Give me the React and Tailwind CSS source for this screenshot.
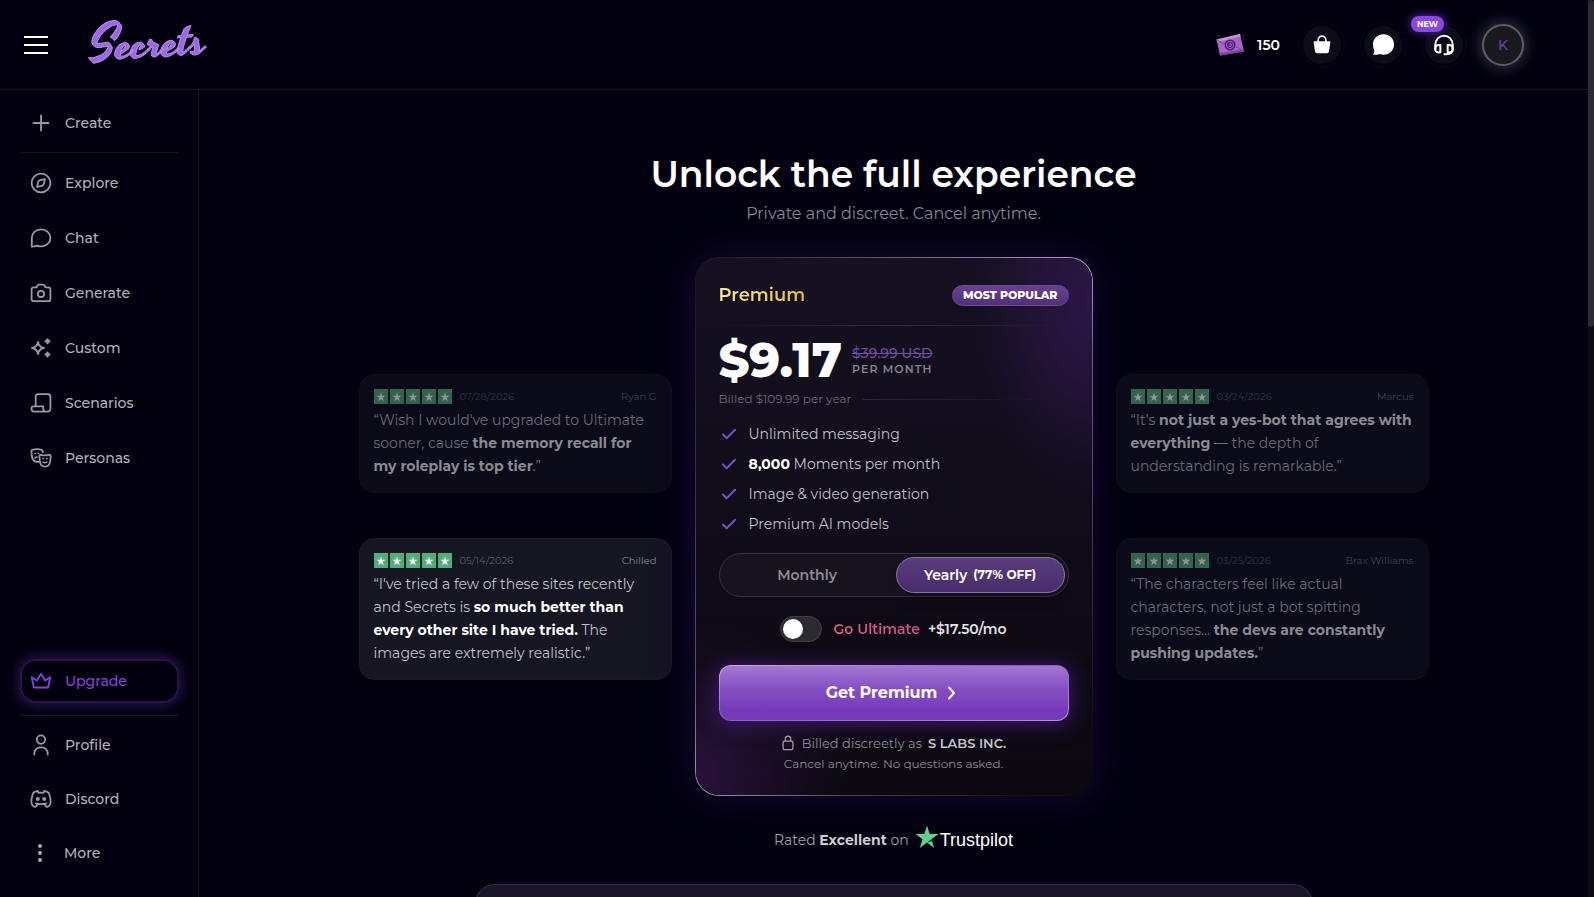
import React, { useState } from "react";

const STAR = "M12 1.6l2.7 7.3 7.8.3-6.100 4.800 2.100 7.500L12 17.200 5.500 21.500l2.100-7.500L1.500 9.200l7.800-.3z";

function Icon({ children, className = "size-6" }) {
  return (
    <svg
      viewBox="0 0 24 24"
      className={className}
      fill="none"
      stroke="currentColor"
      strokeWidth="1.8"
      strokeLinecap="round"
      strokeLinejoin="round"
      aria-hidden="true"
    >
      {children}
    </svg>
  );
}

const icons = {
  Create: <path d="M12 4.500v15M4.500 12h15" />,
  Explore: (
    <>
      <circle cx="12" cy="12" r="9.400" />
      <path d="M15.900 8.100l-1 4.800a2.600 2.600 0 0 1-2 2l-4.800 1 1-4.800a2.600 2.600 0 0 1 2-2z" />
    </>
  ),
  Chat: <path d="M2.800 20.700V12C2.800 7 6.800 3.400 12 3.400s9.400 3.700 9.400 8.500-4.200 8.500-9.400 8.500c-1.600 0-3-.3-4.200-.8-1.500.6-3 1-5 1.100z" />,
  Generate: (
    <>
      <path d="M7.500 6.400l.8-1.700a1.800 1.800 0 0 1 1.600-1h4.200a1.800 1.800 0 0 1 1.600 1l.8 1.700h2.900a2 2 0 0 1 2 2v9.800a2 2 0 0 1-2 2H4.600a2 2 0 0 1-2-2V8.400a2 2 0 0 1 2-2z" />
      <circle cx="12" cy="12.900" r="3.100" />
    </>
  ),
  Custom: (
    <>
      <path d="M9 6c.6 3.700 2.300 5.400 6 6-3.700.6-5.400 2.300-6 6-.6-3.700-2.300-5.400-6-6 3.700-.6 5.400-2.300 6-6z" />
      <path d="M18.500 3.500v3.600M16.700 5.300h3.600M18.500 16.700v3.600M16.700 18.500h3.600" strokeWidth="2.400" />
    </>
  ),
  Scenarios: (
    <path d="M6.700 15.300V5.600a2.400 2.400 0 0 1 2.400-2.400h9.900a2.400 2.400 0 0 1 2.400 2.400v12.200a2.800 2.800 0 0 1-2.800 2.800H5.300a2.800 2.800 0 0 1-2.800-2.800v-.5a2 2 0 0 1 2-2h9.700v2.700a2.700 2.700 0 0 0 2.700 2.600" />
  ),
  Personas: (
    <>
      <path d="M9.600 15.800c-3.800.4-6.100-1.700-6.700-5.300l-.5-5.200a1.300 1.300 0 0 1 1-1.400c3-1 6-1 9.200 0a1.300 1.300 0 0 1 1 1.300v1" />
      <path d="M12 8.800c2.700.8 5.400.8 8.100 0a1.300 1.300 0 0 1 1.600 1.400l-.5 4.800c-.4 3.500-2.300 5.700-5.200 5.700s-4.800-2.200-5.200-5.700l-.4-4.800A1.300 1.300 0 0 1 12 8.800z" />
      <path d="M6 7.600h.6M9.200 7.300h.6M13.900 12.600h.6M17.500 12.600h.6M14 16c1.300 1 2.700 1 4 0M5.900 12c.6-.7 1.300-1 2.200-1" strokeWidth="1.500" />
    </>
  ),
  Upgrade: <path d="M4.900 18.500h14.200l2.200-10.300-5 3.300L12 4.900l-4.300 6.600-5-3.300z" />,
  Profile: (
    <>
      <circle cx="12" cy="6.600" r="4.200" />
      <path d="M5.300 21.500v-1.200a6 6 0 0 1 6-6h1.400a6 6 0 0 1 6 6v1.200" />
    </>
  ),
  Discord: (
    <>
      <circle cx="8.800" cy="12" r="1.100" fill="currentColor" />
      <circle cx="15.200" cy="12" r="1.100" fill="currentColor" />
      <path d="M15.800 17.200c0 .9 1.300 2.700 2 2.700 1.500 0 2.800-1.400 3.400-2.900.6-1.700.4-6.300-1.500-11.300-1.400-1-2.900-1.500-4.400-1.700l-1 1.900a12 12 0 0 0-4.600 0L8.700 4c-1.500.2-3 .700-4.400 1.700C2.400 10.700 2.200 15.300 2.800 17c.6 1.500 1.900 2.900 3.400 2.900.7 0 2-1.800 2-2.700" />
      <path d="M6.800 16.400c3.500 1.100 6.900 1.100 10.400 0" />
    </>
  ),
};

function NavItem({ name }) {
  const active = name === "Upgrade";
  return (
    <a
      href={"#" + name.toLowerCase()}
      className={
        active
          ? "flex h-11 items-center gap-3 rounded-2xl border-2 border-[#28144a] pl-[7px] text-sm font-medium text-[#8344d6] shadow-[0_0_12px_2px_#2c1652]"
          : "flex h-11 items-center gap-3 rounded-2xl pl-[9px] text-sm font-medium text-[#b3b2b9]"
      }
    >
      <Icon className={active ? "size-6" : "size-6 text-[#9b9aa3]"}>{icons[name]}</Icon>
      {name}
    </a>
  );
}

function Header() {
  return (
    <header className="flex h-[90px] shrink-0 items-center border-b border-[#171522] pr-16 pl-6">
      <button type="button" aria-label="Menu" className="flex w-6 flex-col gap-1.5">
        <span className="h-0.5 bg-white" />
        <span className="h-0.5 bg-white" />
        <span className="h-0.5 bg-white" />
      </button>
      <a
        href="#home"
        className="ml-[42px] -rotate-3 font-['Yesteryear','Kaushan_Script','Pacifico','Lobster','Liberation_Serif',cursive] text-[49px] leading-none text-[#9a68e4] [-webkit-text-stroke:1px_#b48be6]"
      >
        Secrets
      </a>
      <div className="ml-auto flex items-center gap-[23px]">
        <a href="#moments" className="flex items-center gap-3 text-sm font-semibold text-white">
          <svg viewBox="0 0 30 26" className="h-[26px] w-[30px]" aria-hidden="true">
            <path d="M1.500 7.500L25 2l4 17.500L5 23.500z" fill="#a866c4" />
            <path d="M1.500 7.500L25 2l.6 2.600L2 10z" fill="#c793d6" />
            <path d="M4.500 21.200L28.500 17l.5 2.500L5 23.500z" fill="#7c459d" />
            <path d="M2 8l7 4M28 18l-7-3" stroke="#7d4a9c" strokeWidth="1" />
            <circle cx="15" cy="13" r="5.600" fill="#4d2178" />
            <circle cx="15" cy="13" r="3.600" fill="none" stroke="#9a62bd" strokeWidth="1" />
            <path d="M13.800 14.200h2.400v-2.400h-2" stroke="#a873c6" strokeWidth="1" fill="none" />
            <path d="M3 3.500h2M27.500 3.500h1.600M25 21.500h1.600M28 5.500v1.500" stroke="#4c2545" strokeWidth="1.500" />
          </svg>
          150
        </a>
        <button type="button" aria-label="Shop" className="grid size-[38px] place-items-center rounded-full bg-[#0c0b18] text-white outline outline-offset-[3px] outline-[#0b0915]">
          <svg viewBox="0 0 24 24" className="size-[22px]" aria-hidden="true">
            <path d="M3.800 8h16.400a.9.900 0 0 1 .9 1l-1.500 10.200a2.200 2.200 0 0 1-2.200 1.900H6.600a2.200 2.200 0 0 1-2.200-1.900L2.900 9a.9.900 0 0 1 .9-1z" fill="currentColor" />
            <path d="M7.800 9V6.500a4.200 4.200 0 0 1 8.400 0V9" fill="none" stroke="currentColor" strokeWidth="1.800" />
          </svg>
        </button>
        <button type="button" aria-label="Messages" className="grid size-[38px] place-items-center rounded-full bg-[#0c0b18] text-white outline outline-offset-[3px] outline-[#0b0915]">
          <svg viewBox="0 0 24 24" className="size-[23px]" aria-hidden="true">
            <path d="M12 1.300C18.400 1.300 23 5.800 23 12s-4.600 10.700-11 10.700c-1.600 0-2.900-.4-4-.9-2 .9-4 1.100-6.400.9-.5 0-.5-.7-.2-1 .8-1 1.100-2.300.9-3.700C1.500 16.200 1 14.200 1 12 1 5.800 5.600 1.300 12 1.300z" fill="currentColor" />
          </svg>
        </button>
        <button type="button" aria-label="Support" className="relative -mr-1 grid size-[38px] place-items-center rounded-full bg-[#0c0b18] text-white outline outline-offset-[3px] outline-[#0b0915]">
          <Icon className="size-[22px]">
            <g strokeWidth="2.200">
              <path d="M2.500 17v-5C2.500 6 6.500 2 12 2s9.500 4 9.500 10v5M21.500 16c0 3.800-2.500 6-7.500 6h-1.500" />
              <path d="M2.500 16.500c0-3.500 1.500-5 5.500-4.500v8c-3.500.5-5.500-.5-5.500-3.500zM21.500 16.500c0-3.500-1.500-5-5.500-4.500v8c3.500.5 5.500-.5 5.500-3.500z" />
            </g>
          </Icon>
          <span className="absolute -top-2.5 -left-3.5 rounded-full bg-[#8a46e0] px-1.5 text-[8px] leading-4 font-bold shadow-[0_0_8px_1px_#4a2090]">NEW</span>
        </button>
        <button type="button" aria-label="Account" className="grid size-[42px] place-items-center rounded-full border-2 border-[#5d5c66] bg-[#19191d] text-sm font-medium text-[#6a3fb0] shadow-[0_0_14px_2px_#34323f]">
          K
        </button>
      </div>
    </header>
  );
}

function Sidebar() {
  return (
    <nav className="flex w-[199px] shrink-0 flex-col justify-between border-r border-[#171522] pt-[11px] pr-[19px] pb-[22px] pl-5">
      <div>
        <NavItem name="Create" />
        <hr className="mt-[7px] mb-2 border-[#15131f]" />
        <div className="flex flex-col gap-[11px]">
          {["Explore", "Chat", "Generate", "Custom", "Scenarios", "Personas"].map((n) => (
            <NavItem key={n} name={n} />
          ))}
        </div>
      </div>
      <div>
        <NavItem name="Upgrade" />
        <hr className="mt-3 mb-[7px] border-[#1b1828]" />
        <div className="flex flex-col gap-[10px]">
          <NavItem name="Profile" />
          <NavItem name="Discord" />
          <button type="button" className="flex h-11 items-center gap-3 pl-2 text-sm font-medium text-[#b3b2b9]">
            <Icon>
              <g fill="currentColor" stroke="none">
                <circle cx="12" cy="5" r="1.900" />
                <circle cx="12" cy="12" r="1.900" />
                <circle cx="12" cy="19" r="1.900" />
              </g>
            </Icon>
            More
          </button>
        </div>
      </div>
    </nav>
  );
}

function Review({ date, name, bright, children }) {
  return (
    <article
      className={
        bright
          ? "rounded-[15px] border border-[#1d1b28] bg-[#161522] p-3.5"
          : "rounded-[15px] border border-[#100e1b] bg-[#0b0a18] p-3.5"
      }
    >
      <div className="flex items-center">
        <div className={bright ? "flex gap-0.5" : "flex gap-0.5 opacity-55"} role="img" aria-label="5 stars">
          {[0, 1, 2, 3, 4].map((i) => (
            <span key={i} className="grid h-[15px] w-3.5 place-items-center bg-[#4fae7c]">
              <svg viewBox="0 0 24 24" className="size-2.5" aria-hidden="true">
                <path d={STAR} fill="#fff" />
              </svg>
            </span>
          ))}
        </div>
        <span className={bright ? "ml-2 text-[10px] leading-4 text-[#5f5e69]" : "ml-2 text-[10px] leading-4 text-[#33323e]"}>{date}</span>
        <span className={bright ? "ml-auto text-[10px] leading-4 text-[#85848e]" : "ml-auto text-[10px] leading-4 text-[#41404b]"}>{name}</span>
      </div>
      <p
        className={
          bright
            ? "mt-1 text-sm leading-[23px] text-[#c2c1c8] [&_b]:font-bold [&_b]:text-white"
            : "mt-1 text-sm leading-[23px] text-[#6b6a74] [&_b]:font-bold [&_b]:text-[#8b8a93]"
        }
      >
        {children}
      </p>
    </article>
  );
}

const features = ["Unlimited messaging", <><b className="font-bold text-white">8,000</b> Moments per month</>, "Image & video generation", "Premium AI models"];

function PlanCard() {
  const [ultimate, setUltimate] = useState(false);
  return (
    <section className="rounded-3xl border border-transparent px-[23px] pt-[26px] pb-5 shadow-[0_0_40px_0_#150a34] [background:radial-gradient(120px_200px_at_100%_8%,#2c1648,transparent)_padding-box,radial-gradient(150px_150px_at_0%_96%,#271239,transparent)_padding-box,linear-gradient(#161122,#100c19_45%,#0c0810)_padding-box,conic-gradient(#6a587a,#b59cc8_36deg,#6a557f_50deg,#4a3762_90deg,#0c0810_140deg,#15101c_155deg,#50435e_190deg,#a18eb2_216deg,#5a4872_235deg,#403058_280deg,#1a1326_323deg,#6a587a)_border-box]">
      <div className="flex items-center justify-between">
        <h2 className="bg-gradient-to-r from-[#f6ea92] to-[#e9bd32] bg-clip-text text-lg leading-[22px] font-semibold text-transparent">Premium</h2>
        <span className="rounded-full border border-[#6f4799] bg-gradient-to-b from-[#694090] to-[#52307c] px-2.5 text-[11px] leading-[19px] font-extrabold text-white">MOST POPULAR</span>
      </div>
      <div className="mt-[19px] h-px bg-gradient-to-r from-transparent via-[#342c40] to-transparent" />
      <div className="mt-2.5 flex items-center gap-2.5">
        <strong className="text-[48px] leading-[48px] font-extrabold text-white">$9.17</strong>
        <div className="flex flex-col">
          <s className="text-sm leading-[18px] font-medium text-[#704b9c]">$39.99 USD</s>
          <span className="text-[11px] leading-[15px] font-semibold tracking-widest text-[#85818c]">PER MONTH</span>
        </div>
      </div>
      <div className="mt-1.5 flex items-center gap-3 text-xs leading-[18px] text-[#6b6773]">
        Billed $109.99 per year
        <span className="h-px flex-1 bg-gradient-to-r from-[#2c2635] to-transparent" />
      </div>
      <ul className="mt-[11px] flex flex-col">
        {features.map((f, i) => (
          <li key={i} className="flex h-[30px] items-center gap-3 pl-0.5 text-sm text-[#c2c0c6]">
            <svg viewBox="0 0 16 16" className="size-4" fill="none" stroke="#7250c8" strokeWidth="2" strokeLinecap="round" strokeLinejoin="round" aria-hidden="true">
              <path d="M2 8.500l3.700 3.700L14 3.800" />
            </svg>
            <span>{f}</span>
          </li>
        ))}
      </ul>
      <div className="mt-3.5 grid h-[44px] grid-cols-2 gap-1 rounded-full border border-[#352f3f] bg-[#17131e] p-[3px]" role="group" aria-label="Billing period">
        <button type="button" className="rounded-full text-sm font-semibold text-[#8f8c96]">Monthly</button>
        <button type="button" className="flex items-center justify-center gap-1.5 rounded-full border border-[#8e73ad] bg-gradient-to-b from-[#5a3d7c] to-[#492c6c] text-sm font-semibold text-white shadow-lg">
          Yearly <span className="text-xs font-bold">(77% OFF)</span>
        </button>
      </div>
      <label className="mt-[19px] flex h-[26px] cursor-pointer items-center justify-center text-sm font-semibold">
        <input type="checkbox" role="switch" className="peer sr-only" checked={ultimate} onChange={() => setUltimate(!ultimate)} />
        <span className="flex h-[26px] w-[42px] items-center rounded-full border border-[#423f47] bg-[#2d2a31] px-0.5 peer-checked:justify-end peer-checked:bg-[#7a3dc0]">
          <span className="size-5 rounded-full bg-white" />
        </span>
        <span className="ml-[11px] bg-gradient-to-r from-[#e0617b] to-[#d04a94] bg-clip-text text-transparent">Go Ultimate</span>
        <span className="ml-2 text-[#e5e3e8]">+$17.50/mo</span>
      </label>
      <button type="button" className="mt-[23px] flex h-14 w-full items-center justify-center gap-2 rounded-xl border border-transparent pr-1 text-base font-bold text-white shadow-[0_2px_20px_2px_#3a1a6a] [background:linear-gradient(#a279d2,#854fc4_42%,#7639b8_85%)_padding-box,linear-gradient(170deg,#cdb0ea,#8a55ca_45%,#b592df)_border-box]">
        Get Premium
        <svg viewBox="0 0 12 16" className="h-4 w-3" fill="none" stroke="currentColor" strokeWidth="2" strokeLinecap="round" strokeLinejoin="round" aria-hidden="true">
          <path d="M4 2.500L9 8l-5 5.500" />
        </svg>
      </button>
      <p className="mt-3 flex items-center justify-center gap-1.5 text-[13px] leading-5 text-[#8d8992]">
        <svg viewBox="0 0 14 18" className="mr-px h-4 w-3.5" fill="none" stroke="#a39fab" strokeWidth="1.400" aria-hidden="true">
          <rect x="1.500" y="7" width="11" height="9.500" rx="1.500" />
          <path d="M4 7V4.300a3 3 0 0 1 6 0V7" />
        </svg>
        Billed discreetly as <b className="font-semibold text-[#c5c2c9]">S LABS INC.</b>
      </p>
      <p className="text-center text-xs leading-[22px] text-[#8d8992]">Cancel anytime. No questions asked.</p>
    </section>
  );
}

export default function App() {
  return (
    <div className="flex h-screen overflow-hidden bg-[#02000f] font-['Montserrat','Inter',sans-serif] antialiased">
      <div className="flex min-w-0 flex-1 flex-col">
        <Header />
        <div className="flex min-h-0 flex-1">
          <Sidebar />
          <main className="flex min-w-0 flex-1 flex-col items-center overflow-hidden px-6 pt-[60px]">
            <h1 className="text-4xl leading-[48px] font-semibold text-white">Unlock the full experience</h1>
            <p className="mt-1 text-base leading-6 text-[#8a8993]">Private and discreet. Cancel anytime.</p>
            <div className="mt-[31px] grid w-full max-w-[1070px] grid-cols-[1fr_398px_1fr] items-center gap-[23px]">
              <div className="flex flex-col gap-[45px]">
                <Review date="07/28/2026" name="Ryan G">
                  “Wish I would've upgraded to Ultimate sooner, cause <b>the memory recall for my roleplay is top tier</b>.”
                </Review>
                <Review date="05/14/2026" name="Chilled" bright>
                  “I've tried a few of these sites recently and Secrets is <b>so much better than every other site I have tried.</b> The images are extremely realistic.”
                </Review>
              </div>
              <PlanCard />
              <div className="flex flex-col gap-[45px]">
                <Review date="03/24/2026" name="Marcus">
                  “It's <b>not just a yes-bot that agrees with everything</b> — the depth of understanding is remarkable.”
                </Review>
                <Review date="03/25/2026" name="Brax Williams">
                  “The characters feel like actual characters, not just a bot spitting responses... <b>the devs are constantly pushing updates.</b>”
                </Review>
              </div>
            </div>
            <p className="mt-7 flex shrink-0 items-center text-sm leading-8 text-[#a3a1aa]">
              <span>
                Rated <b className="font-bold text-[#cfcdd4]">Excellent</b> on
              </span>
              <svg viewBox="0 0 24 24" className="mr-px mb-1.5 ml-1.5 size-6" aria-hidden="true">
                <path d="M12 .5l2.700 8.600h9l-7.300 5.200 2.800 8.600L12 17.600l-7.200 5.300 2.800-8.600L.3 9.100h9z" fill="#5fd08f" />
                <path d="M17 16.300l-.6-2L12 17.600z" fill="#0d3a2c" />
              </svg>
              <span className="font-['Liberation_Sans',sans-serif] text-lg leading-8 text-white">Trustpilot</span>
            </p>
            <section aria-label="Plan comparison" className="mt-7 min-h-20 w-full max-w-[838px] shrink-0 rounded-t-[20px] border border-b-0 border-[#342d44] bg-[#1b1329]" />
          </main>
        </div>
      </div>
      <div className="w-1.5 shrink-0 bg-[#0b0a15]" aria-hidden="true">
        <div className="h-[36.4%] rounded-full bg-[#2b2935]" />
      </div>
    </div>
  );
}
